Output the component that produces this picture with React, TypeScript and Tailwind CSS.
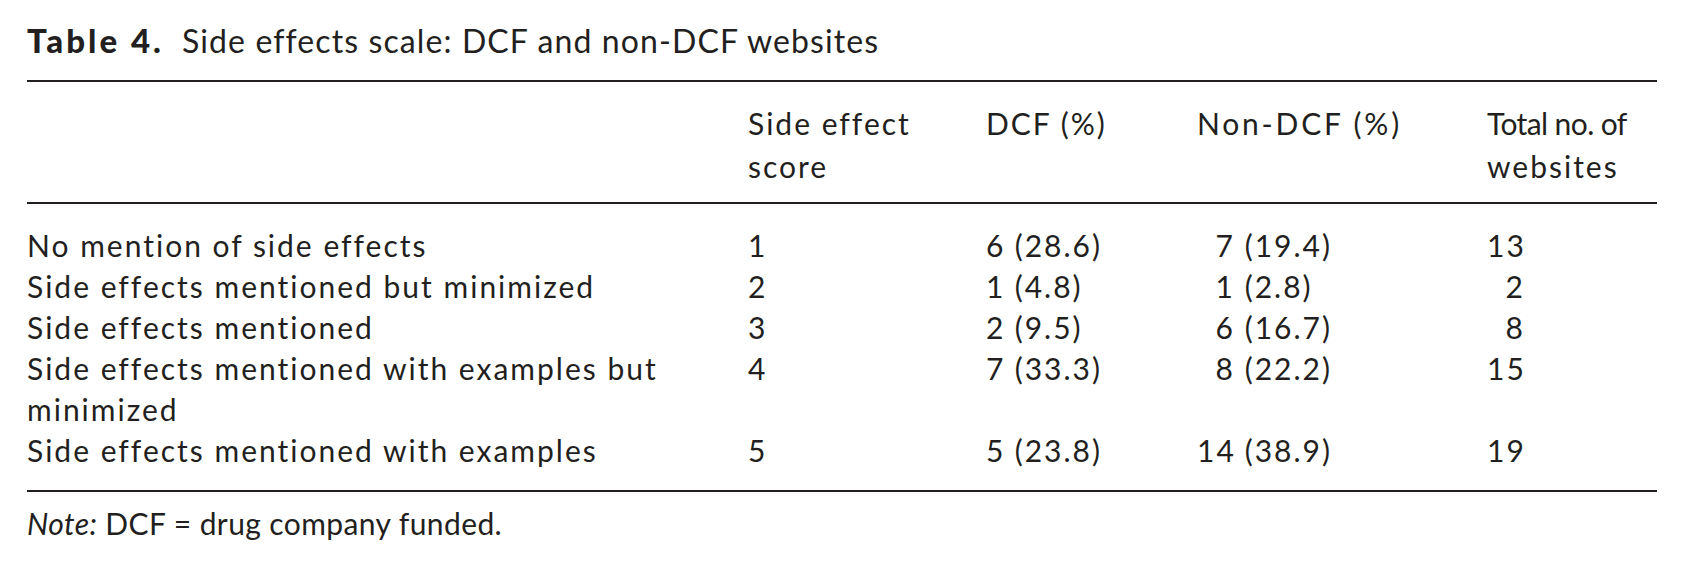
const ROWS = [
  { label: "No mention of side effects", score: "1", dcf: ["6", "28.6"], non: ["7", "19.4"], total: "13" },
  { label: "Side effects mentioned but minimized", score: "2", dcf: ["1", "4.8"], non: ["1", "2.8"], total: "2" },
  { label: "Side effects mentioned", score: "3", dcf: ["2", "9.5"], non: ["6", "16.7"], total: "8" },
  { label: "Side effects mentioned with examples but\nminimized", score: "4", dcf: ["7", "33.3"], non: ["8", "22.2"], total: "15" },
  { label: "Side effects mentioned with examples", score: "5", dcf: ["5", "23.8"], non: ["14", "38.9"], total: "19" },
];

function Count({ n, pct, w }: { n: string; pct: string; w: string }) {
  return (
    <span>
      <span className={`inline-block text-right ${w}`}>{n}</span> ({pct})
    </span>
  );
}

export default function App() {
  return (
    <div
      className="h-[566px] w-[1682px] bg-white px-[27px] pt-[20px] text-[#231f20]"
      style={{ fontFamily: "Lato, 'Open Sans', sans-serif" }}
    >
      <h2 className="text-[32px] leading-[40px]">
        <span className="text-[33px] font-black tracking-[3px]">Table 4.</span>
        <span className="ml-[18px] tracking-[1.1px]">Side effects scale: DCF and non-DCF websites</span>
      </h2>

      <table className="mt-[19px] w-[1630px] table-fixed border-collapse text-[30px] tracking-[2px]">
        <colgroup>
          <col className="w-[721px]" />
          <col className="w-[238px]" />
          <col className="w-[211px]" />
          <col className="w-[290px]" />
          <col className="w-[170px]" />
        </colgroup>
        <thead>
          <tr className="border-y-2 border-[#231f20] text-left align-top leading-[43px]">
            <th className="pt-[20px] pb-[14px] font-normal"></th>
            <th className="pt-[20px] pb-[14px] font-normal">
              Side effect
              <br />
              score
            </th>
            <th className="pt-[20px] pb-[14px] font-normal">DCF (%)</th>
            <th className="pt-[20px] pb-[14px] font-normal tracking-[2.8px]">Non-DCF (%)</th>
            <th className="whitespace-nowrap pt-[20px] pb-[14px] font-normal">
              <span className="tracking-[-0.6px]">Total no. of</span>
              <br />
              websites
            </th>
          </tr>
        </thead>
        <tbody className="border-b-2 border-[#231f20] leading-[41px]">
          {ROWS.map((r, i) => (
            <tr key={i} className="align-top">
              <td className={`whitespace-pre-line ${i === 0 ? "pt-[21px]" : ""} ${i === ROWS.length - 1 ? "pb-[19px]" : ""}`}>
                {r.label}
              </td>
              <td className={`${i === 0 ? "pt-[21px]" : ""}`}>{r.score}</td>
              <td className={`${i === 0 ? "pt-[21px]" : ""}`}>
                <Count n={r.dcf[0]} pct={r.dcf[1]} w="w-[19px]" />
              </td>
              <td className={`${i === 0 ? "pt-[21px]" : ""}`}>
                <Count n={r.non[0]} pct={r.non[1]} w="w-[38px]" />
              </td>
              <td className={`${i === 0 ? "pt-[21px]" : ""}`}>
                <span className="inline-block w-[38px] text-right">{r.total}</span>
              </td>
            </tr>
          ))}
        </tbody>
      </table>

      <p className="mt-[11px] text-[30px] leading-[41px] tracking-[0.4px]">
        <span className="italic">Note:</span> DCF = drug company funded.
      </p>
    </div>
  );
}
